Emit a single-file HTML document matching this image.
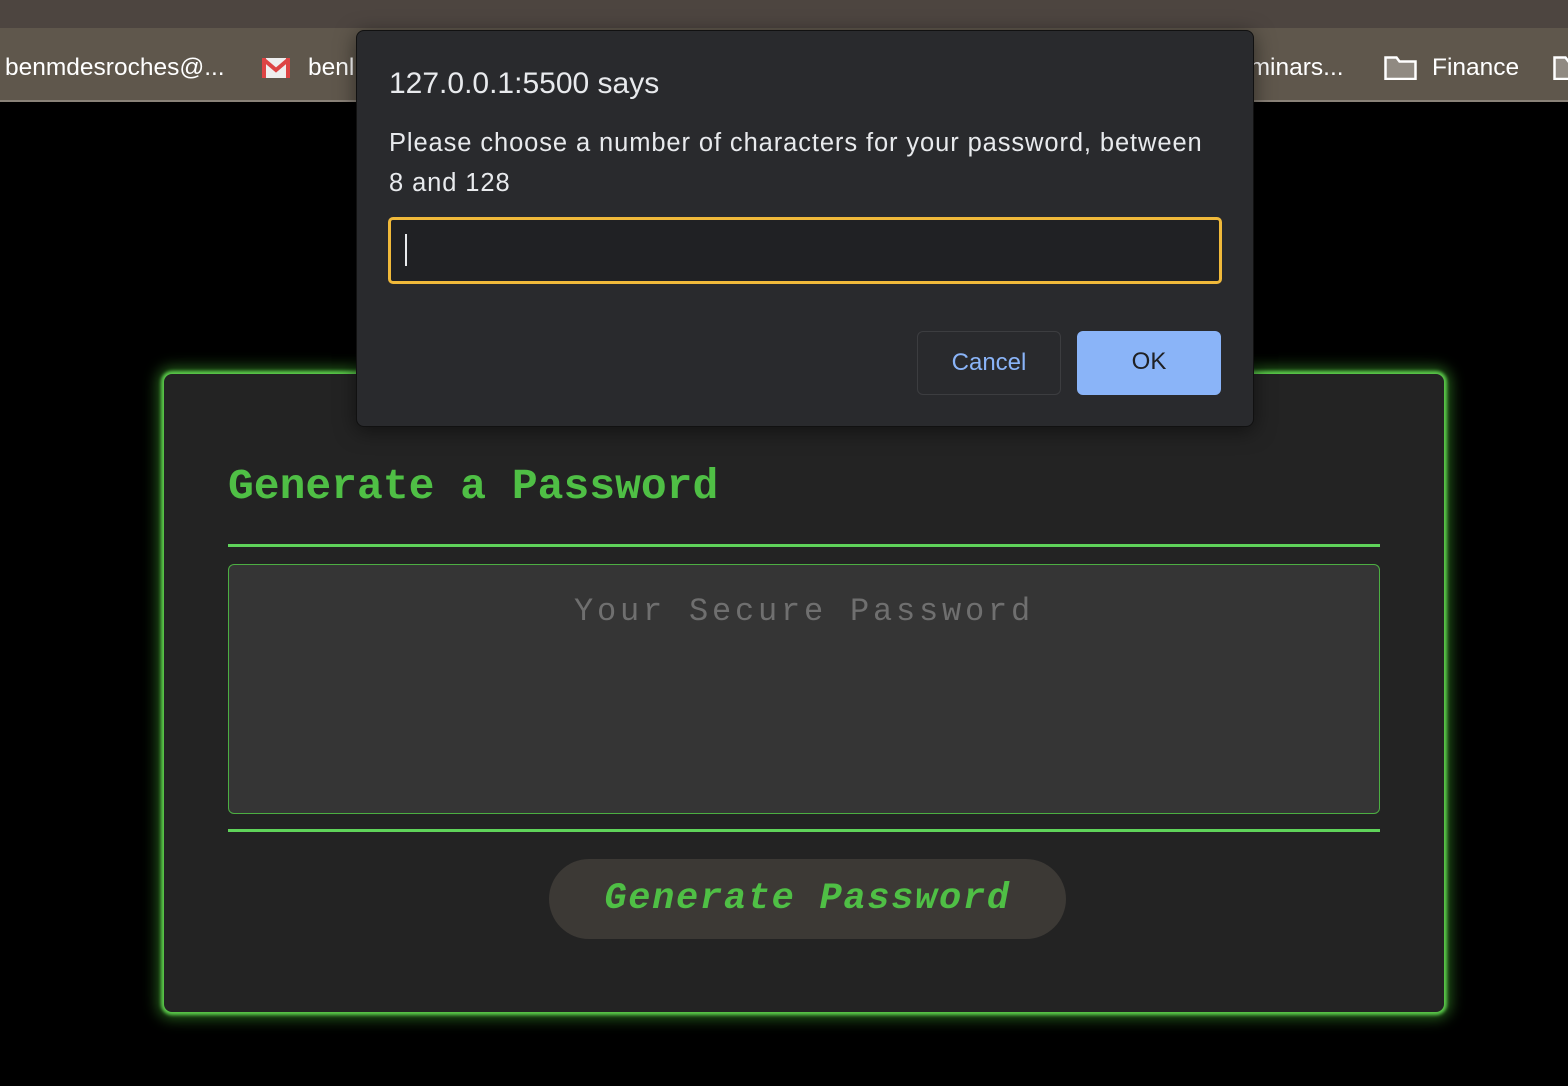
<!DOCTYPE html>
<html><head><style>
body{margin:0;width:1568px;height:1086px;background:#000;position:relative;overflow:hidden;font-family:"Liberation Sans",sans-serif}
.top{position:absolute;left:0;top:0;width:1568px;height:28px;background:#4d4540}
.bm{position:absolute;left:0;top:28px;width:1568px;height:72px;background:#5f574c;border-bottom:2px solid #8a8278}
.bm span{position:absolute;top:26px;color:#fff;font-size:24.5px}
.card{position:absolute;left:164px;top:374px;width:1280px;height:638px;background:#232323;border-radius:8px;box-shadow:0 0 3px 3px #5ac84a,0 0 14px 7px rgba(80,200,60,.45)}
h1{position:absolute;left:64px;top:88px;margin:0;font:bold 43px "Liberation Mono",monospace;color:#4fbf45;white-space:pre}
.hr{position:absolute;left:64px;width:1152px;height:3px;background:#5fd35a}
.ta{position:absolute;left:64px;top:190px;width:1150px;height:248px;background:#353535;border:1px solid #4cae42;border-radius:6px}
.ta div{text-align:center;margin-top:28px;font:32px "Liberation Mono",monospace;letter-spacing:3.8px;color:#6f6f6f;white-space:pre}
.btn{position:absolute;left:385px;top:485px;width:517px;height:80px;background:#3c3935;border-radius:40px;text-align:center;font:italic bold 37px/80px "Liberation Mono",monospace;letter-spacing:1.7px;color:#4fbf45;white-space:pre}
.dlg{position:absolute;left:356px;top:30px;width:896px;height:395px;background:#292a2d;border:1px solid #111;border-radius:8px;box-shadow:0 4px 20px rgba(0,0,0,.5);color:#e8eaed}
.inp{position:absolute;left:31px;top:186px;width:828px;height:61px;border:3px solid #f0b93a;border-radius:5px;background:#202124}
.inp i{position:absolute;left:14px;top:14px;width:2px;height:32px;background:#e8eaed}
.b{position:absolute;top:300px;height:62px;border-radius:6px;font-size:24px;text-align:center;line-height:62px}
</style></head><body>
<div class="top"></div>
<div class="bm">
<span style="left:5px">benmdesroches@...</span>
<svg style="position:absolute;left:262px;top:30px" width="28" height="20"><rect width="28" height="20" fill="#eee"/><path d="M1 1 L14 12 L27 1" stroke="#d44" stroke-width="4" fill="none"/><rect x="0" y="0" width="4" height="20" fill="#d44"/><rect x="24" y="0" width="4" height="20" fill="#d44"/></svg>
<span style="left:308px">benl</span>
<span style="left:1236px">eminars...</span>
<svg style="position:absolute;left:1384px;top:28px" width="33" height="24"><path d="M1.5 23V1.5h11l3 4h16V23z" fill="#908a82" stroke="#fff" stroke-width="2.5"/></svg>
<span style="left:1432px">Finance</span>
<svg style="position:absolute;left:1553px;top:28px" width="33" height="24"><path d="M1.5 23V1.5h11l3 4h16V23z" fill="#908a82" stroke="#fff" stroke-width="2.5"/></svg>
</div>
<div class="card">
<h1>Generate a Password</h1>
<div class="hr" style="top:170px"></div>
<div class="ta"><div>Your Secure Password</div></div>
<div class="hr" style="top:455px"></div>
<div class="btn">Generate Password</div>
</div>
<div class="dlg">
<div style="position:absolute;left:32px;top:36px;font-size:30px">127.0.0.1:5500 says</div>
<div style="position:absolute;left:32px;top:92px;width:860px;font-size:25.5px;letter-spacing:0.9px;line-height:40px;white-space:nowrap">Please choose a number of characters for your password, between<br>8 and 128</div>
<div class="inp"><i></i></div>
<div class="b" style="left:560px;width:142px;border:1px solid #3c3d40;color:#8ab4f8">Cancel</div>
<div class="b" style="left:720px;width:144px;background:#8ab4f8;color:#202124;height:64px">OK</div>
</div>
</body></html>
